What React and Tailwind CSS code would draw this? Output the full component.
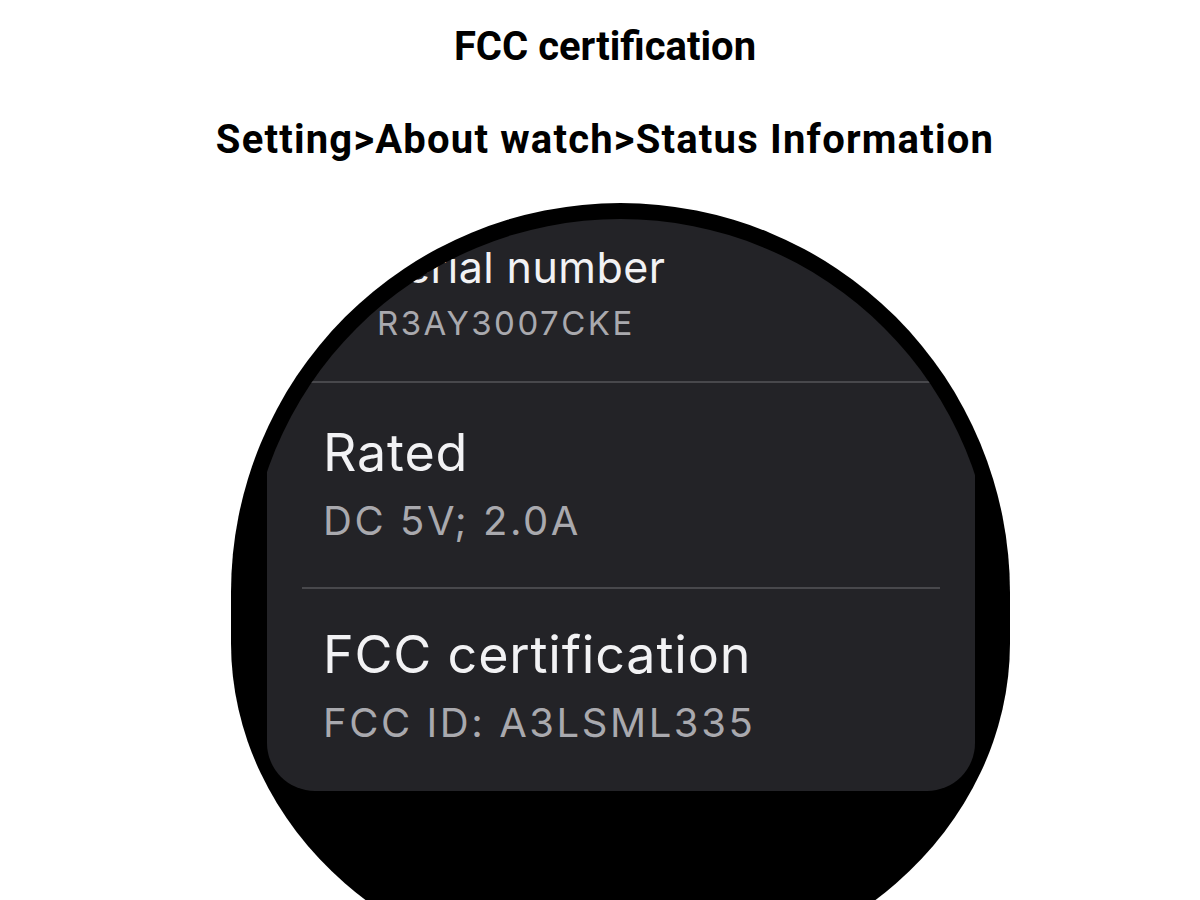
import React from "react";

const watchFont = { fontFamily: "Inter, 'Open Sans', sans-serif" };
const titleFont = { fontFamily: "Roboto, 'Liberation Sans', sans-serif" };

function Item({ title, sub, first }) {
  if (first) {
    return (
      <div className="pl-[110px]">
        <div className="text-[43px] leading-none text-[#f2f2f4] whitespace-nowrap tracking-[0.01em]">{title}</div>
        <div className="mt-[18px] text-[33px] leading-none text-[#a9a9ae] whitespace-nowrap tracking-[0.075em]">{sub}</div>
      </div>
    );
  }
  return (
    <div className="pl-[56px]">
      <div className="text-[52px] leading-none text-[#f2f2f4] whitespace-nowrap tracking-[0.016em]">{title}</div>
      <div className="mt-[22px] text-[40px] leading-none text-[#a9a9ae] whitespace-nowrap tracking-[0.064em]">{sub}</div>
    </div>
  );
}

export default function App() {
  return (
    <div className="w-[1200px] h-[900px] overflow-hidden bg-white flex flex-col items-center">
      <div className="mt-[27px] ml-[10px] text-[40px] leading-none font-bold text-black whitespace-nowrap" style={titleFont}>
        FCC certification
      </div>
      <div className="mt-[53px] ml-[10px] text-[40px] leading-none font-bold text-black whitespace-nowrap tracking-[0.03em]" style={titleFont}>
        Setting&gt;About watch&gt;Status Information
      </div>
      <div className="mt-[43px] self-start ml-[231px] w-[779px] h-[780px] shrink-0 overflow-hidden bg-black p-[16px] rounded-tl-[389.5px] rounded-tr-[389.5px] rounded-br-[389.5px_340px] rounded-bl-[389.5px_340px]">
        <div className="w-full h-full overflow-hidden rounded-tl-[373.5px] rounded-tr-[373.5px]" style={watchFont}>
          <div className="ml-[20px] w-[708px] -mt-[40px] rounded-[48px] bg-[#232327] pt-[67px] pb-[48px]">
            <Item first title="Serial number" sub="R3AY3007CKE" />
            <div className="mt-[41px] mx-[35px] h-[2px] bg-[#48484c]" />
            <div className="mt-[44px]">
              <Item title="Rated" sub="DC 5V; 2.0A" />
            </div>
            <div className="mt-[46px] mx-[35px] h-[2px] bg-[#48484c]" />
            <div className="mt-[40px]">
              <Item title="FCC certification" sub="FCC ID: A3LSML335" />
            </div>
          </div>
        </div>
      </div>
    </div>
  );
}
